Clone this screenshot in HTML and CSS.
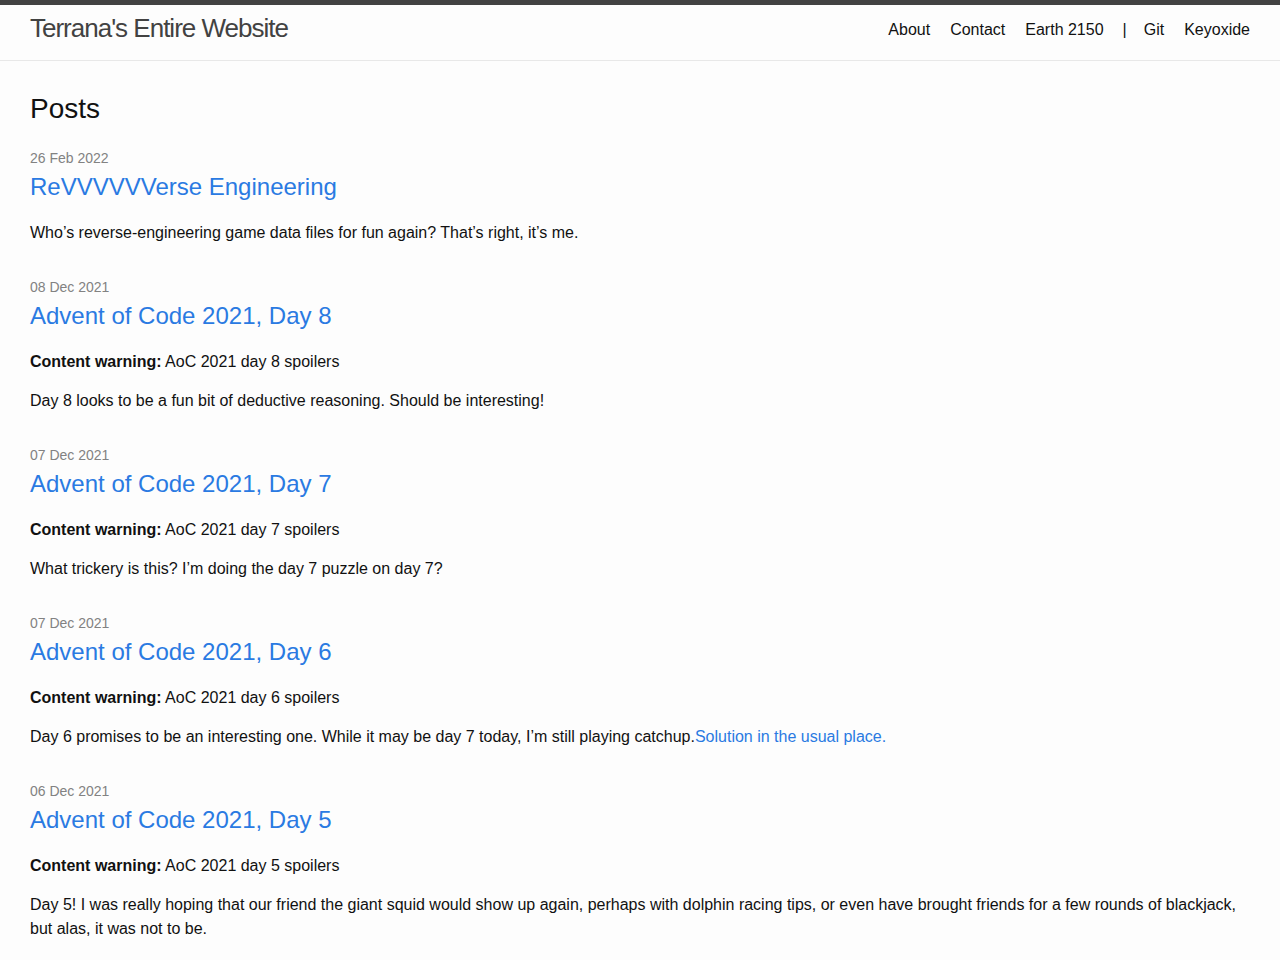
FILE: index.html
```html
<!DOCTYPE html>
<html lang="en">
<head>
    <meta charset="UTF-8">
    <meta name="viewport" content="width=device-width, initial-scale=1.0">
    <title>Terrana's Entire Website</title>
    <link rel="stylesheet" href="styles.css">
</head>
<body>

    <header class="site-header">
        <div class="wrapper header-inner">
            <a class="site-title" href="#">Terrana's Entire Website</a>
            <nav class="site-nav">
                <a class="page-link" href="#">About</a>
                <a class="page-link" href="#">Contact</a>
                <a class="page-link" href="#">Earth 2150</a>
                <span class="nav-sep">|</span>
                <a class="page-link" href="#">Git</a>
                <a class="page-link" href="#">Keyoxide</a>
            </nav>
        </div>
    </header>

    <main class="page-content">
        <div class="wrapper">
            <h1 class="post-list-heading">Posts</h1>
            <ul class="post-list">
                <li>
                    <span class="post-meta">26 Feb 2022</span>
                    <h3><a class="post-link" href="#">ReVVVVVVerse Engineering</a></h3>
                    <p>Who’s reverse-engineering game data files for fun again? That’s right, it’s me.</p>
                </li>
                <li>
                    <span class="post-meta">08 Dec 2021</span>
                    <h3><a class="post-link" href="#">Advent of Code 2021, Day 8</a></h3>
                    <p><strong>Content warning:</strong> AoC 2021 day 8 spoilers</p>
                    <p>Day 8 looks to be a fun bit of deductive reasoning. Should be interesting!</p>
                </li>
                <li>
                    <span class="post-meta">07 Dec 2021</span>
                    <h3><a class="post-link" href="#">Advent of Code 2021, Day 7</a></h3>
                    <p><strong>Content warning:</strong> AoC 2021 day 7 spoilers</p>
                    <p>What trickery is this? I’m doing the day 7 puzzle on day 7?</p>
                </li>
                <li>
                    <span class="post-meta">07 Dec 2021</span>
                    <h3><a class="post-link" href="#">Advent of Code 2021, Day 6</a></h3>
                    <p><strong>Content warning:</strong> AoC 2021 day 6 spoilers</p>
                    <p>Day 6 promises to be an interesting one. While it may be day 7 today, I’m still playing catchup.<a href="#">Solution in the usual place.</a></p>
                </li>
                <li>
                    <span class="post-meta">06 Dec 2021</span>
                    <h3><a class="post-link" href="#">Advent of Code 2021, Day 5</a></h3>
                    <p><strong>Content warning:</strong> AoC 2021 day 5 spoilers</p>
                    <p>Day 5! I was really hoping that our friend the giant squid would show up again, perhaps with dolphin racing tips, or even have brought friends for a few rounds of blackjack, but alas, it was not to be.</p>
                </li>
            </ul>
        </div>
    </main>

</body>
</html>
```

FILE: styles.css
```css
body {
    margin: 0;
    padding: 0;
    font-family: "Liberation Sans", Arial, sans-serif;
    font-size: 16px;
    line-height: 1.5;
    color: #111;
    background-color: #fdfdfd;
}
a {
    color: #2a7ae2;
    text-decoration: none;
}
.wrapper {
    padding: 0 30px;
}
/* cabecera */
.site-header {
    border-top: 5px solid #424242;
    border-bottom: 1px solid #e8e8e8;
    height: 55px;
}
.header-inner {
    display: flex;
    justify-content: space-between;
    align-items: flex-start;
}
.site-title {
    font-size: 26px;
    line-height: 46px;
    letter-spacing: -1px;
    font-weight: 300;
    color: #424242;
}
.site-nav {
    display: flex;
    gap: 20px;
    line-height: 49px;
}
.page-link {
    color: #111;
}
.nav-sep {
    color: #111;
    margin: 0 -3px 0 -1px;
}
/* contenido */
.page-content {
    padding: 30px 0;
}
.post-list-heading {
    font-size: 28px;
    font-weight: 400;
    line-height: 35px;
    margin: 0 0 22px;
}
.post-list {
    list-style: none;
    margin: 0;
    padding: 0;
}
.post-list li {
    margin-bottom: 32px;
}
.post-meta {
    display: block;
    font-size: 14px;
    color: #828282;
}
.post-list h3 {
    font-size: 24px;
    font-weight: 400;
    line-height: 36px;
    margin: 0 0 16px;
}
.post-list p {
    margin: 0 0 15px;
}
.post-list p:last-child {
    margin-bottom: 0;
}
```
